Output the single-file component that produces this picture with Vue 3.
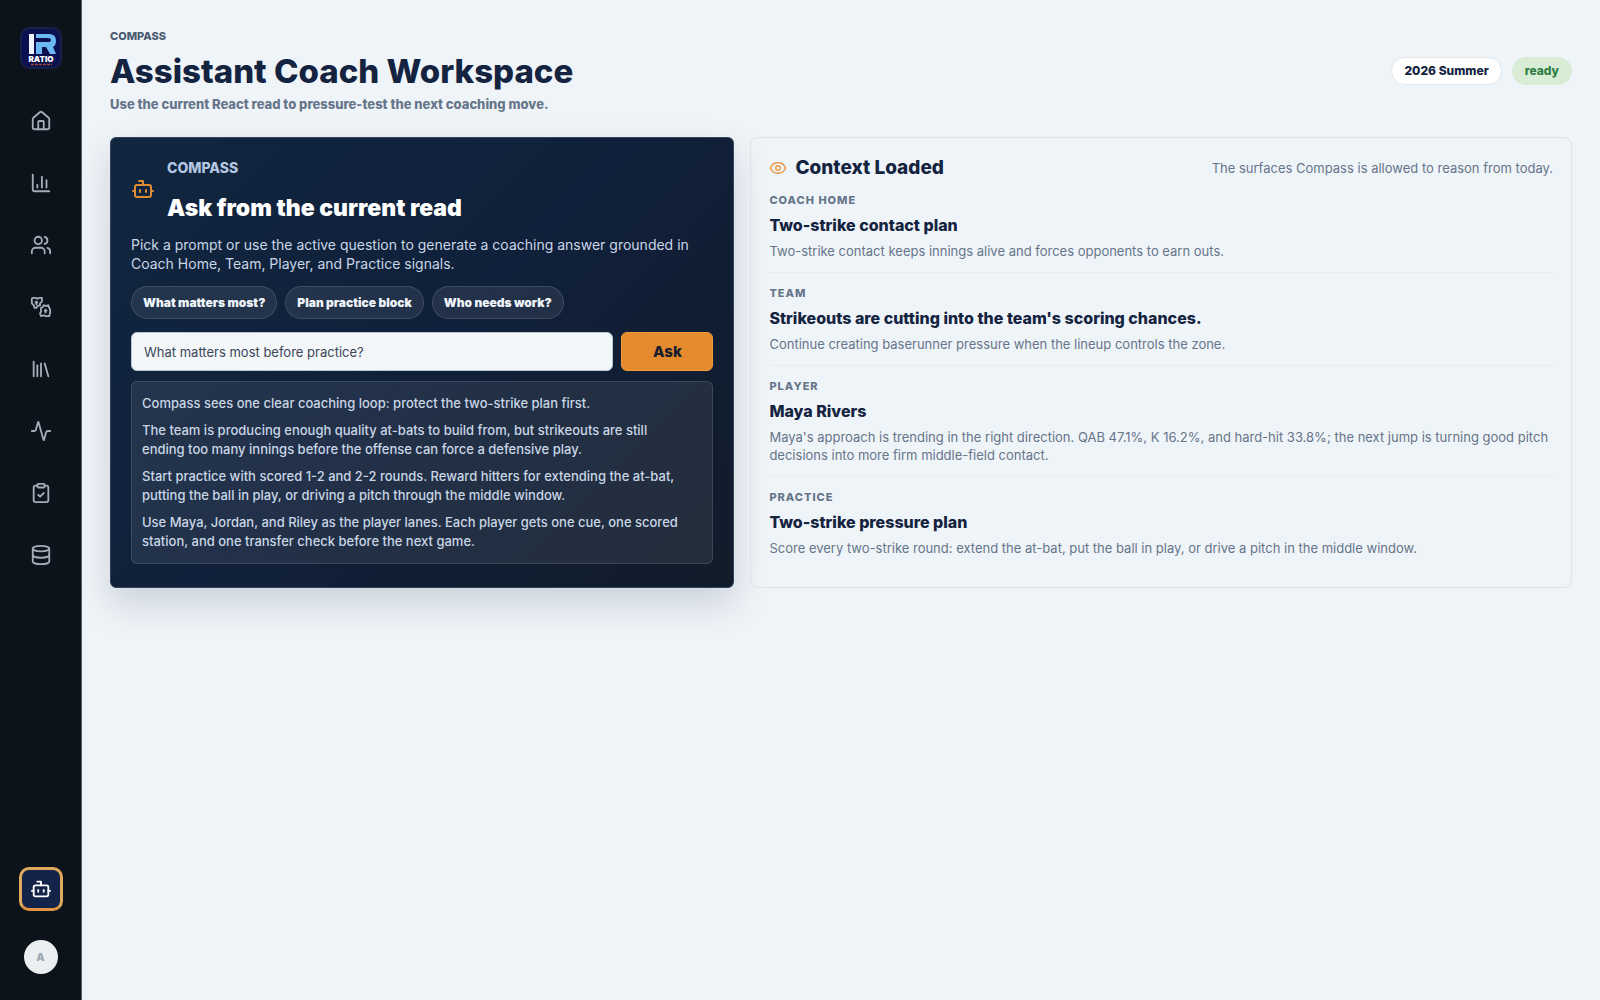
<script setup>
import { ref } from 'vue'

const nav = [
  { label: 'Home', paths: ['M15 21v-8a1 1 0 0 0-1-1h-4a1 1 0 0 0-1 1v8', 'M3 10a2 2 0 0 1 .709-1.528l7-6a2 2 0 0 1 2.582 0l7 6A2 2 0 0 1 21 10v9a2 2 0 0 1-2 2H5a2 2 0 0 1-2-2z'] },
  { label: 'Stats', paths: ['M3 3v16a2 2 0 0 0 2 2h16', 'M18 17V9', 'M13 17V5', 'M8 17v-3'] },
  { label: 'Team', paths: ['M16 21v-2a4 4 0 0 0-4-4H6a4 4 0 0 0-4 4v2', 'M16 3.128a4 4 0 0 1 0 7.744', 'M22 21v-2a4 4 0 0 0-3-3.87', 'M9 3a4 4 0 1 0 0 8a4 4 0 1 0 0-8'] },
  { label: 'Development', paths: ['M3 2h3l2 1 2-1h3v4l-2 2v2l-3 1-1 2H5l-1-3-2-2V3z', 'M7 6v3', 'M8 7h-2', 'M12 13l2-1 1-2 3 1 2-1 1 3 1 2v3l-1 4h-4l-2-1-3 1-1-3 1-2z', 'M17 15v3', 'M18 16h-2'] },
  { label: 'Library', paths: ['m16 6 4 14', 'M12 6v14', 'M8 8v12', 'M4 4v16'] },
  { label: 'Activity', paths: ['M22 12h-2.48a2 2 0 0 0-1.93 1.46l-2.35 8.36a.25.25 0 0 1-.48 0L9.24 2.18a.25.25 0 0 0-.48 0l-2.35 8.36A2 2 0 0 1 4.49 12H2'] },
  { label: 'Practice', paths: ['M9 2h6a1 1 0 0 1 1 1v2a1 1 0 0 1-1 1H9a1 1 0 0 1-1-1V3a1 1 0 0 1 1-1z', 'M16 4h2a2 2 0 0 1 2 2v14a2 2 0 0 1-2 2H6a2 2 0 0 1-2-2V6a2 2 0 0 1 2-2h2', 'm9 14 2 2 4-4'] },
  { label: 'Data', paths: ['M12 2a9 3 0 1 0 0 6a9 3 0 1 0 0-6', 'M3 5v14a9 3 0 0 0 18 0V5', 'M3 12a9 3 0 0 0 18 0'] },
]
const bot = ['M12 8V4H8', 'M6 8h12a2 2 0 0 1 2 2v8a2 2 0 0 1-2 2H6a2 2 0 0 1-2-2v-8a2 2 0 0 1 2-2z', 'M2 14h2', 'M20 14h2', 'M15 13v2', 'M9 13v2']

const question = ref('What matters most before practice?')
const prompts = ['What matters most?', 'Plan practice block', 'Who needs work?']
const answer = [
  'Compass sees one clear coaching loop: protect the two-strike plan first.',
  'The team is producing enough quality at-bats to build from, but strikeouts are still ending too many innings before the offense can force a defensive play.',
  'Start practice with scored 1-2 and 2-2 rounds. Reward hitters for extending the at-bat, putting the ball in play, or driving a pitch through the middle window.',
  'Use Maya, Jordan, and Riley as the player lanes. Each player gets one cue, one scored station, and one transfer check before the next game.',
]
const context = [
  { source: 'Coach Home', title: 'Two-strike contact plan', text: 'Two-strike contact keeps innings alive and forces opponents to earn outs.' },
  { source: 'Team', title: "Strikeouts are cutting into the team's scoring chances.", text: 'Continue creating baserunner pressure when the lineup controls the zone.' },
  { source: 'Player', title: 'Maya Rivers', text: "Maya's approach is trending in the right direction. QAB 47.1%, K 16.2%, and hard-hit 33.8%; the next jump is turning good pitch decisions into more firm middle-field contact." },
  { source: 'Practice', title: 'Two-strike pressure plan', text: 'Score every two-strike round: extend the at-bat, put the ball in play, or drive a pitch in the middle window.' },
]
</script>

<template>
  <div class="shell">
    <aside class="sidebar">
      <a class="logo" href="#" aria-label="Ratio Coach">
        <svg viewBox="0 0 42 42" width="42" height="42" aria-hidden="true">
          <rect x="1" y="1" width="40" height="40" rx="9" fill="#0b1050" stroke="#172148" stroke-width="2" />
          <rect x="9" y="7" width="5" height="20" fill="#f2f5ff" />
          <path d="M16 7h13q7 0 7 7q0 4-3 6l3 7h-6l-4-7h-4v7h-6v-12h12q3 0 3-2t-3-2H16z" fill="#6bb9f2" />
          <text x="21" y="35" text-anchor="middle" class="logo-name">RATIO</text>
          <path d="M11 37.500h21" stroke="#a04a3c" stroke-width="1.500" stroke-dasharray="3 1" />
        </svg>
      </a>
      <nav class="nav" aria-label="Main">
        <a v-for="item in nav" :key="item.label" href="#" :aria-label="item.label">
          <svg class="icon" viewBox="0 0 24 24" width="22" height="22"><path v-for="d in item.paths" :key="d" :d="d" /></svg>
        </a>
      </nav>
      <a class="compass-link" href="#" aria-label="Compass" aria-current="page">
        <svg class="icon" viewBox="0 0 24 24" width="22" height="22"><path v-for="d in bot" :key="d" :d="d" /></svg>
      </a>
      <button class="avatar" type="button">A</button>
    </aside>

    <main class="main">
      <header class="page-head">
        <div>
          <p class="eyebrow">COMPASS</p>
          <h1>Assistant Coach Workspace</h1>
          <p class="subtitle">Use the current React read to pressure-test the next coaching move.</p>
        </div>
        <div class="badges">
          <span class="badge">2026 Summer</span>
          <span class="badge ready">ready</span>
        </div>
      </header>

      <div class="panels">
        <section class="ask">
          <div class="ask-head">
            <svg class="icon" viewBox="0 0 24 24" width="24" height="24"><path v-for="d in bot" :key="d" :d="d" /></svg>
            <div>
              <p class="ask-eyebrow">COMPASS</p>
              <h2>Ask from the current read</h2>
            </div>
          </div>
          <p class="intro">Pick a prompt or use the active question to generate a coaching answer grounded in Coach Home, Team, Player, and Practice signals.</p>
          <div class="prompts">
            <button v-for="p in prompts" :key="p" type="button">{{ p }}</button>
          </div>
          <form class="ask-form" @submit.prevent>
            <input v-model="question" type="text" aria-label="Question for Compass" />
            <button type="submit">Ask</button>
          </form>
          <div class="answer">
            <p v-for="line in answer" :key="line">{{ line }}</p>
          </div>
        </section>

        <section class="context">
          <div class="context-head">
            <svg class="icon" viewBox="0 0 24 24" width="18" height="18">
              <path d="M2.062 12.348a1 1 0 0 1 0-.696 10.750 10.750 0 0 1 19.876 0 1 1 0 0 1 0 .696 10.750 10.750 0 0 1-19.876 0" />
              <circle cx="12" cy="12" r="3" />
            </svg>
            <h2>Context Loaded</h2>
            <p>The surfaces Compass is allowed to reason from today.</p>
          </div>
          <article v-for="item in context" :key="item.source">
            <span class="source">{{ item.source }}</span>
            <h3>{{ item.title }}</h3>
            <p>{{ item.text }}</p>
          </article>
        </section>
      </div>
    </main>
  </div>
</template>

<style>
body {
  margin: 0;
  background: #eff4f8;
}
</style>

<style scoped>
.shell {
  display: flex;
  min-height: 100vh;
  font-family: Inter, "Liberation Sans", sans-serif;
  color: #14233f;
}
.shell * {
  box-sizing: border-box;
}
h1, h2, h3, p {
  margin: 0;
}
button, input {
  font-family: inherit;
}
.icon {
  display: block;
  flex: none;
  fill: none;
  stroke: currentColor;
  stroke-width: 2;
  stroke-linecap: round;
  stroke-linejoin: round;
}

.sidebar {
  display: flex;
  flex: none;
  flex-direction: column;
  align-items: center;
  width: 82px;
  padding: 27px 0 26px;
  background: #0d131b;
  border-right: 1px solid #59616b;
}
.logo svg {
  display: block;
}
.logo-name {
  font-size: 8px;
  font-weight: 900;
  fill: #ffffff;
}
.nav {
  display: flex;
  flex-direction: column;
  gap: 18px;
  margin-top: 30px;
}
.nav a {
  display: grid;
  place-items: center;
  width: 44px;
  height: 44px;
  color: #a3adba;
}
.compass-link {
  display: grid;
  place-items: center;
  width: 44px;
  height: 44px;
  margin-top: auto;
  color: #ffffff;
  background: #14234a;
  border: 3px solid #e0a85c;
  border-bottom-color: #e39440;
  border-radius: 10px;
}
.avatar {
  width: 34px;
  height: 34px;
  margin-top: 29px;
  padding: 0;
  font-size: 11px;
  font-weight: 800;
  color: #9aa4af;
  background: #eceff1;
  border: 0;
  border-radius: 50%;
}

.main {
  flex: 1;
  min-width: 0;
  padding: 28px;
}
.page-head {
  display: flex;
  align-items: center;
  justify-content: space-between;
  gap: 24px;
}
.eyebrow {
  font-size: 11px;
  font-weight: 800;
  line-height: 16px;
  color: #4a5b70;
}
h1 {
  margin-top: 7px;
  font-size: 33px;
  font-weight: 800;
  line-height: 40px;
}
.subtitle {
  margin-top: 4px;
  font-size: 13px;
  font-weight: 800;
  line-height: 18px;
  color: #66758a;
}
.badges {
  display: flex;
  gap: 10px;
}
.badge {
  padding: 5px 12px;
  font-size: 12px;
  font-weight: 800;
  line-height: 16px;
  background: #ffffff;
  border: 1px solid #e2e8ee;
  border-radius: 14px;
}
.badge.ready {
  color: #2f7d43;
  background: #d8ecd6;
  border-color: #d8ecd6;
}

.panels {
  display: grid;
  grid-template-columns: minmax(0, 76fr) minmax(0, 100fr);
  gap: 16px;
  margin-top: 24px;
}
.ask {
  padding: 20px 20px 23px;
  color: #c9d6e6;
  background: linear-gradient(135deg, #11263f, #10203a 50%, #111c2a);
  border: 1px solid #33445c;
  border-radius: 6px;
  box-shadow: 0 16px 36px rgba(20, 30, 70, 0.16);
}
.ask-head {
  display: flex;
  align-items: center;
  gap: 12px;
  color: #e08a34;
}
.ask-eyebrow {
  font-size: 14px;
  font-weight: 800;
  line-height: 20px;
  color: #b4c6e2;
}
.ask h2 {
  margin-top: 18px;
  font-size: 23px;
  font-weight: 900;
  line-height: 24px;
  color: #ffffff;
}
.intro {
  margin-top: 15px;
  font-size: 14px;
  line-height: 19px;
}
.prompts {
  display: flex;
  flex-wrap: wrap;
  gap: 8px;
  margin-top: 13px;
}
.prompts button {
  height: 33px;
  padding: 0 11px;
  font-size: 12px;
  font-weight: 900;
  color: #f0f5fb;
  background: rgba(255, 255, 255, 0.08);
  border: 1px solid rgba(255, 255, 255, 0.13);
  border-radius: 17px;
}
.ask-form {
  display: flex;
  gap: 8px;
  margin-top: 13px;
}
.ask-form input {
  flex: 1;
  min-width: 0;
  height: 39px;
  padding: 0 12px;
  font-size: 13px;
  color: #3b4656;
  background: #f3f7fa;
  border: 1px solid #b9c6d3;
  border-radius: 6px;
}
.ask-form button {
  width: 92px;
  height: 39px;
  padding: 0;
  font-size: 15px;
  font-weight: 800;
  color: #17202e;
  background: #e68a2e;
  border: 1px solid #f09a40;
  border-radius: 6px;
}
.answer {
  display: grid;
  gap: 8px;
  margin-top: 10px;
  padding: 12px 10px;
  font-size: 13px;
  font-weight: 500;
  line-height: 19px;
  background: rgba(255, 255, 255, 0.08);
  border: 1px solid rgba(255, 255, 255, 0.12);
  border-radius: 6px;
}
.answer p {
  max-width: 550px;
}

.context {
  padding: 18px;
  border: 1px solid #dde3e9;
  border-radius: 8px;
}
.context-head {
  display: flex;
  align-items: center;
  gap: 8px;
  margin-bottom: 12px;
  color: #ee9a4a;
}
.context-head h2 {
  font-size: 19px;
  font-weight: 800;
  line-height: 24px;
  color: #14233f;
}
.context-head p {
  margin-left: auto;
}
.context p {
  font-size: 13px;
  line-height: 18px;
  color: #66758a;
}
.context article {
  display: grid;
  gap: 6px;
  padding: 12px 0;
  border-bottom: 1px solid #e7ecf3;
}
.context article:first-of-type {
  padding-top: 0;
}
.context article:last-child {
  padding-bottom: 0;
  border-bottom: 0;
}
.source {
  font-size: 11px;
  font-weight: 800;
  line-height: 16px;
  letter-spacing: 1px;
  text-transform: uppercase;
  color: #66758a;
}
h3 {
  font-size: 16px;
  font-weight: 800;
  line-height: 22px;
}
</style>
